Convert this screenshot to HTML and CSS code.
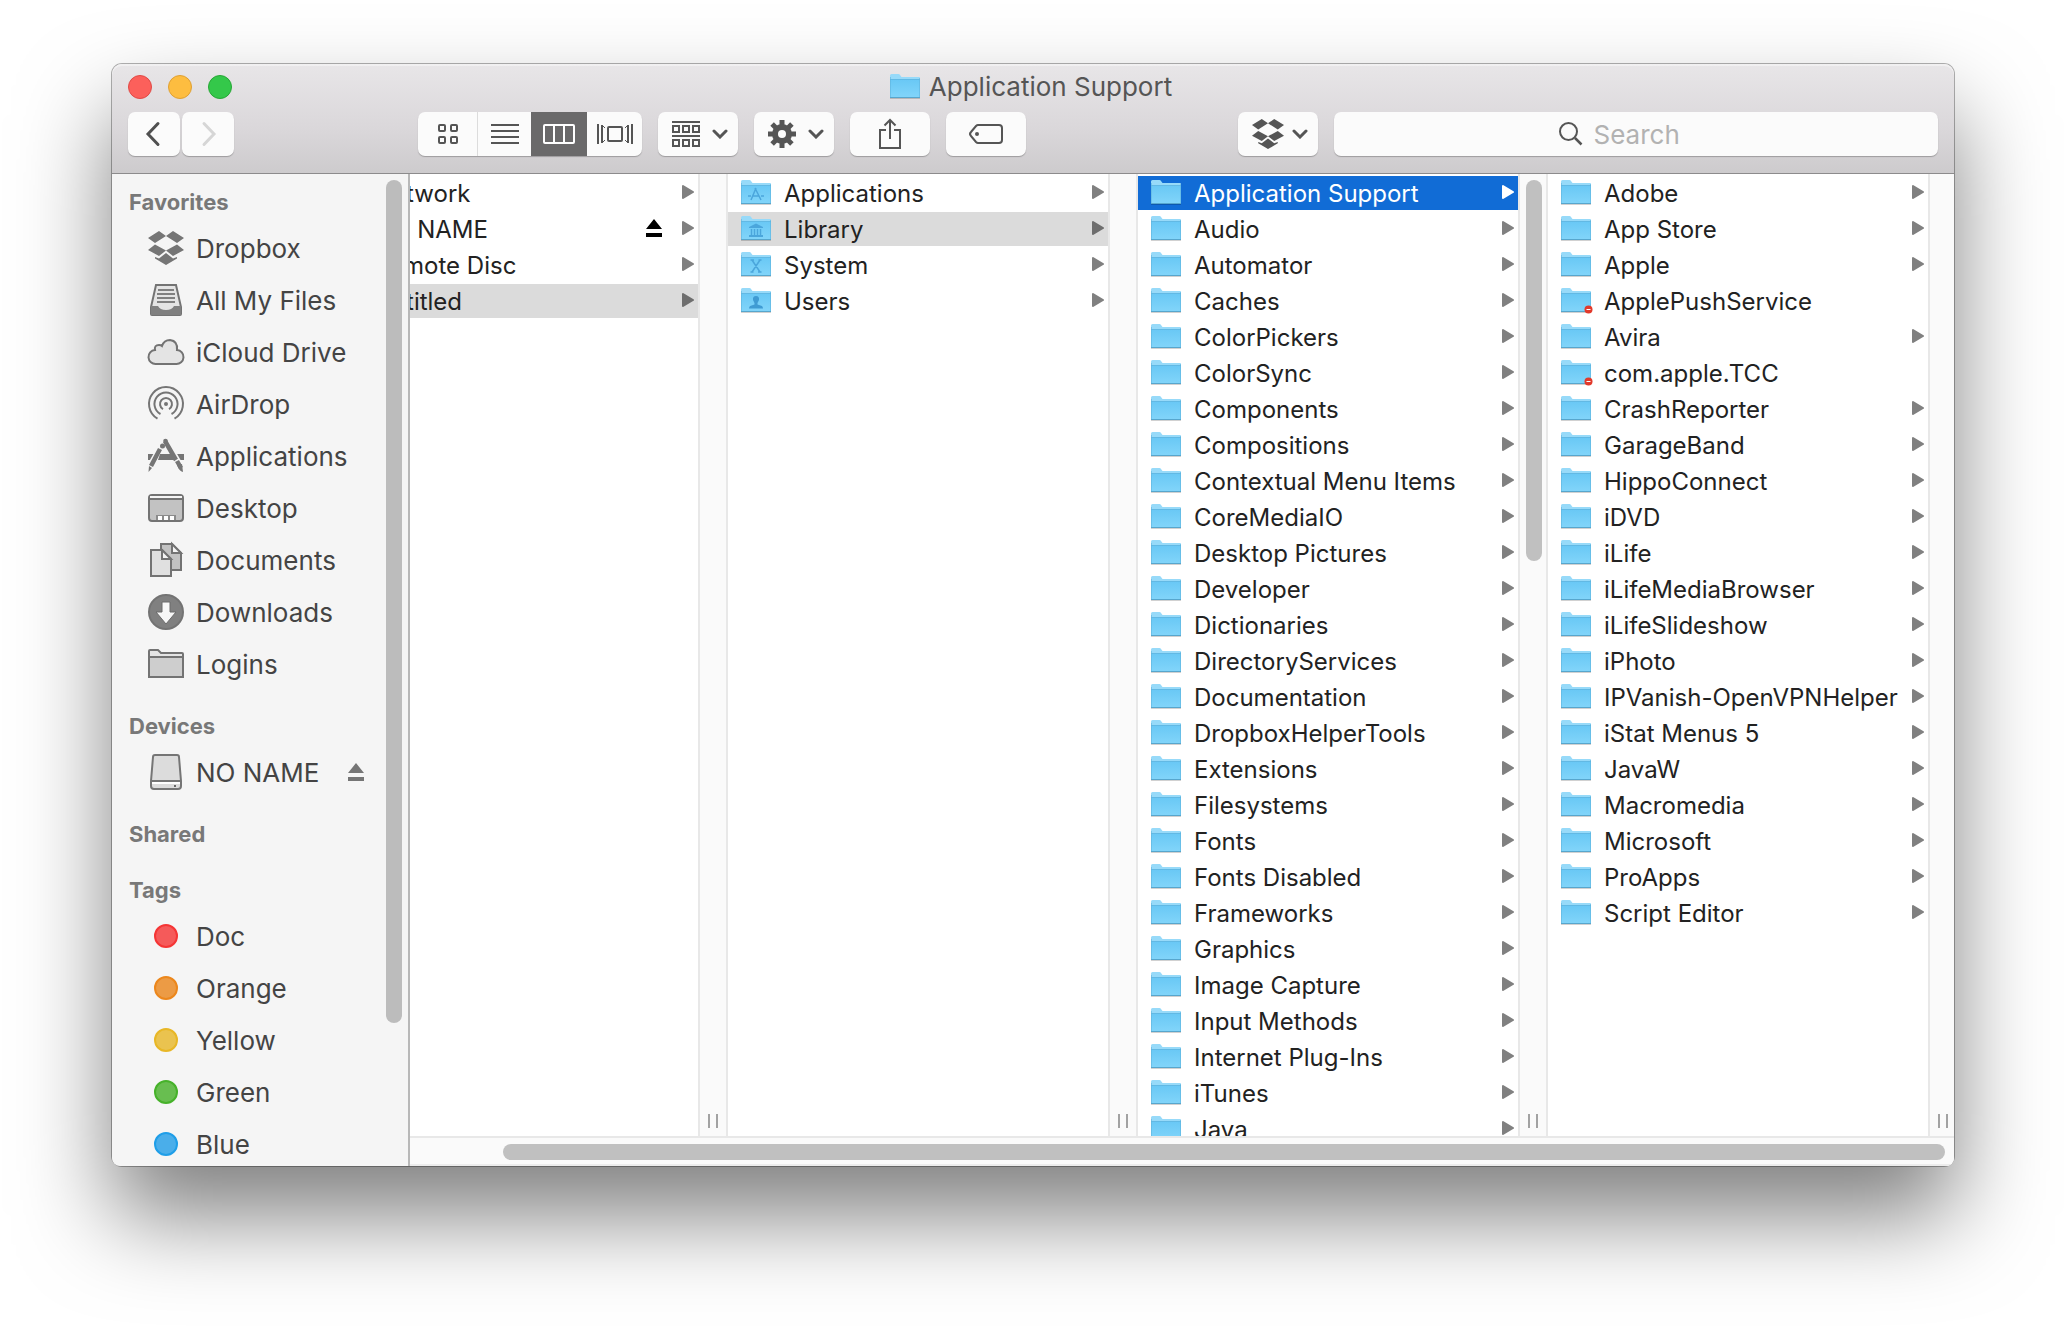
FILE: index.html
```html
<!DOCTYPE html>
<html lang="en">
<head>
<meta charset="utf-8">
<title>Application Support</title>
<link rel="stylesheet" href="styles.css">
</head>
<body>
<svg class="sprite" aria-hidden="true">
  <defs>
    <linearGradient id="folder-face" x1="0" y1="0" x2="0" y2="1">
      <stop offset="0" stop-color="#69c8f5"/><stop offset="1" stop-color="#82d5fa"/>
    </linearGradient>
  </defs>
  <symbol id="folder" viewBox="0 0 30 25">
    <path d="M0 3V1.500Q0 0 1.500 0H8.500Q9.500 0 10 1L11.500 3H29Q30 3 30 4V8H0Z" fill="#97daf9"/>
    <path d="M0 5.500H30V24H0Z" fill="url(#folder-face)"/>
    <path d="M0 5.500H30" stroke="#62b9e4"/>
    <path d="M.5 3V23.500H29.500V4" fill="none" stroke="#5fb4de" stroke-opacity=".6"/>
    <path d="M0 23.500H30" stroke="#57a6cd"/>
    <path d="M0 24.500H30" stroke="#000" stroke-opacity=".18"/>
  </symbol>
  <symbol id="arrow" viewBox="0 0 12 14"><path d="M1 1L11 7L1 13Z" fill="currentColor" stroke="currentColor" stroke-width="2" stroke-linejoin="round"/></symbol>
  <symbol id="chevron" viewBox="0 0 16 10"><path d="M2 2L8 8L14 2" fill="none" stroke="currentColor" stroke-width="3" stroke-linecap="round"/></symbol>
  <symbol id="eject" viewBox="0 0 16 18"><path d="M8 0L16 10H0ZM0 14H16V18H0Z" fill="currentColor"/></symbol>
  <symbol id="dropbox" viewBox="0 0 36 36"><path d="M0 8L11 1L18 6L7 13ZM36 8L25 1L18 6L29 13ZM0 20L7 14.500L18 20.500L11 26ZM36 20L29 14.500L18 20.500L25 26ZM7 27L11 28.500L18 23L25 28.500L29 27V28.500L18 35L7 28.500Z" fill="currentColor"/></symbol>
</svg>

<main class="window">
  <header class="header">
    <div class="titlebar">
      <div class="lights">
        <button class="light close" aria-label="Close"></button>
        <button class="light minimize" aria-label="Minimize"></button>
        <button class="light expand" aria-label="Zoom"></button>
      </div>
      <h1 class="title"><svg class="folder"><use href="#folder"/></svg>Application Support</h1>
    </div>
    <div class="toolbar">
      <div class="nav">
        <button class="tool step" aria-label="Back"><svg width="16" height="26" viewBox="0 0 16 26"><path d="M12 2.500L2 13L12 23.500" fill="none" stroke="#505050" stroke-width="3" stroke-linecap="round"/></svg></button>
        <button class="tool step" aria-label="Forward"><svg width="16" height="26" viewBox="0 0 16 26"><path d="M4 2.500L14 13L4 23.500" fill="none" stroke="#d6d6d6" stroke-width="3" stroke-linecap="round"/></svg></button>
      </div>
      <div class="views">
        <button class="view" aria-label="Icons"><svg width="20" height="20" viewBox="0 0 20 20" fill="none" stroke="currentColor" stroke-width="2"><rect x="1" y="1" width="6" height="6" rx="1"/><rect x="13" y="1" width="6" height="6" rx="1"/><rect x="1" y="13" width="6" height="6" rx="1"/><rect x="13" y="13" width="6" height="6" rx="1"/></svg></button>
        <button class="view" aria-label="List"><svg width="28" height="20" viewBox="0 0 28 20"><path d="M0 1H28M0 7H28M0 13H28M0 19H28" stroke="currentColor" stroke-width="2"/></svg></button>
        <button class="view selected" aria-label="Columns"><svg width="32" height="20" viewBox="0 0 32 20"><path d="M2 1H30Q31 1 31 2V18Q31 19 30 19H2Q1 19 1 18V2Q1 1 2 1ZM11 1V19M21 1V19" fill="none" stroke="currentColor" stroke-width="2"/></svg></button>
        <button class="view" aria-label="Cover Flow"><svg width="36" height="20" viewBox="0 0 36 20" fill="none" stroke="currentColor" stroke-width="2"><rect x="11" y="3" width="14" height="14" rx="1"/><path d="M1 0V20M35 0V20M5 1V19M31 1V19"/><path d="M6 2L8 4M6 18L8 16M30 2L28 4M30 18L28 16" stroke-width="1"/></svg></button>
      </div>
      <button class="tool menu" aria-label="Arrange"><svg width="28" height="26" viewBox="0 0 28 26" fill="none" stroke="currentColor" stroke-width="2"><path d="M0 1H28M0 15H28"/><rect x="1" y="5" width="6" height="6"/><rect x="11" y="5" width="6" height="6"/><rect x="21" y="5" width="6" height="6"/><rect x="1" y="19" width="6" height="6"/><rect x="11" y="19" width="6" height="6"/><rect x="21" y="19" width="6" height="6"/></svg><svg class="chevron"><use href="#chevron"/></svg></button>
      <button class="tool menu" aria-label="Action"><svg width="28" height="28" viewBox="0 0 28 28"><g stroke="currentColor" stroke-width="5"><path d="M14 0V28M0 14H28M4.100 4.100L23.900 23.900M23.900 4.100L4.100 23.900"/></g><circle cx="14" cy="14" r="10" fill="currentColor"/><circle cx="14" cy="14" r="4" fill="#fbfbfb"/></svg><svg class="chevron"><use href="#chevron"/></svg></button>
      <button class="tool" aria-label="Share"><svg width="22" height="32" viewBox="0 0 22 32"><path d="M7 12H1V30H21V12H15M11 21V2M5.500 7.500L11 2L16.500 7.500" fill="none" stroke="currentColor" stroke-width="2"/></svg></button>
      <button class="tool" aria-label="Edit Tags"><svg width="34" height="20" viewBox="0 0 34 20"><path d="M9 1H30Q33 1 33 4V16Q33 19 30 19H9Q8 19 7 18L2 12Q0 10 2 8L7 2Q8 1 9 1Z" fill="none" stroke="currentColor" stroke-width="2"/><circle cx="8" cy="10" r="2" fill="currentColor"/></svg></button>
      <button class="tool menu dropbox" aria-label="Dropbox"><svg width="32" height="32"><use href="#dropbox"/></svg><svg class="chevron"><use href="#chevron"/></svg></button>
      <label class="search"><svg width="24" height="24" viewBox="0 0 24 24"><circle cx="9.500" cy="9.500" r="8.500" fill="none" stroke="currentColor" stroke-width="2"/><path d="M16 16L22.500 22.500" stroke="currentColor" stroke-width="2.500"/></svg><input class="query" type="search" placeholder="Search" aria-label="Search"></label>
    </div>
  </header>

  <div class="body">
    <nav class="sidebar">
      <h2 class="heading">Favorites</h2>
      <a class="place" href="#"><svg class="glyph"><use href="#dropbox"/></svg>Dropbox</a>
      <a class="place" href="#"><svg class="glyph" viewBox="0 0 36 36"><path d="M8 3H28L33 25V32Q33 33 32 33H4Q3 33 3 32V25Z" fill="#e4e4e4" stroke="#737373" stroke-width="2"/><path d="M3 24H10Q12 28 18 28T26 24H33V33H3Z" fill="#808080"/><path d="M10 8H26M9 12H27M9 16H27M9 20H27" stroke="#808080" stroke-width="2"/></svg>All My Files</a>
      <a class="place" href="#"><svg class="glyph" viewBox="0 0 36 36"><path d="M8 30A7 7 0 0 1 7 16Q6 11 11 11Q13 11 14 12Q16 6 22 6Q30 7 29 16A7 7 0 0 1 28 30Z" fill="#e4e4e4" stroke="#737373" stroke-width="2"/></svg>iCloud Drive</a>
      <a class="place" href="#"><svg class="glyph" viewBox="0 0 36 36" fill="none" stroke="#757575" stroke-width="2"><circle cx="18" cy="18" r="2" fill="#757575" stroke="none"/><path d="M9.500 32.700A17 17 0 1 1 26.500 32.700M12.500 28A11.500 11.500 0 1 1 23.500 28M15 23.200A6 6 0 1 1 21 23.200"/></svg>AirDrop</a>
      <a class="place" href="#"><svg class="glyph" viewBox="0 0 36 36"><path d="M0 16H36V22H0Z" fill="#757575"/><path d="M15 7L2 30M17 3L32 29" stroke="#f5f5f5" stroke-width="8"/><path d="M12 16H24L26 22H10Z" fill="#757575"/><path d="M12 11L3 28M17 3L28 22M29 23L33 30" stroke="#757575" stroke-width="4.500"/><circle cx="14.500" cy="8" r="2.500" fill="#757575"/><circle cx="17.500" cy="3" r="2.300" fill="#757575"/><path d="M.5 34L1 28L4 30ZM29 27L34 26L35 34Q31 33 29 27Z" fill="#757575"/></svg>Applications</a>
      <a class="place" href="#"><svg class="glyph" viewBox="0 0 36 36"><rect x="1" y="5" width="34" height="26" rx="3" fill="#c2c2c2" stroke="#737373" stroke-width="2"/><path d="M2 6H34V8H2Z" fill="#f5f5f5"/><path d="M1 9H35" stroke="#737373" stroke-width="2"/><path d="M8 25H28V30H8Z" fill="#8b8b8b"/><path d="M10 26H14V30H10ZM16 26H20V30H16ZM22 26H26V30H22Z" fill="#fff"/></svg>Desktop</a>
      <a class="place" href="#"><svg class="glyph" viewBox="0 0 36 36" stroke="#737373" stroke-width="2"><path d="M13 2H24L33 11V28H13Z" fill="#c2c2c2"/><path d="M24 2V11H33Z" fill="#f5f5f5"/><path d="M3 8H14L23 17V34H3Z" fill="#e0e0e0"/><path d="M14 8V17H23Z" fill="#f5f5f5"/></svg>Documents</a>
      <a class="place" href="#"><svg class="glyph" viewBox="0 0 36 36"><circle cx="18" cy="18" r="17" fill="#808080" stroke="#737373" stroke-width="2"/><path d="M14 8H22V18H28L18 30L8 18H14Z" fill="#f7f7f7" stroke="#6b6b6b"/></svg>Downloads</a>
      <a class="place" href="#"><svg class="glyph" viewBox="0 0 36 36"><path d="M1 31V5Q1 4 2 4H10L13 7H34Q35 7 35 8V31Z" fill="#e4e4e4" stroke="#737373" stroke-width="2"/><path d="M2 12H34V30H2Z" fill="#cecece"/><path d="M1 11H35" stroke="#737373" stroke-width="2"/></svg>Logins</a>
      <h2 class="heading">Devices</h2>
      <a class="place" href="#"><svg class="glyph" viewBox="0 0 36 36"><path d="M7 1H29Q31 1 31 3L33 27V32Q33 35 30 35H6Q3 35 3 32V27L5 3Q5 1 7 1Z" fill="#dcdcdc" stroke="#757575" stroke-width="2"/><path d="M3 27H33" stroke="#757575" stroke-width="2"/><path d="M4 29H32" stroke="#fff" stroke-width="2"/><path d="M26 31H28V33H26Z" fill="#666"/></svg><span class="label">NO NAME</span><svg class="eject"><use href="#eject"/></svg></a>
      <h2 class="heading">Shared</h2>
      <h2 class="heading">Tags</h2>
      <a class="place" href="#"><span class="dot doc"></span>Doc</a>
      <a class="place" href="#"><span class="dot orange"></span>Orange</a>
      <a class="place" href="#"><span class="dot yellow"></span>Yellow</a>
      <a class="place" href="#"><span class="dot green"></span>Green</a>
      <a class="place" href="#"><span class="dot blue"></span>Blue</a>
      <span class="thumb sidebar-thumb"></span>
    </nav>

    <section class="browser">
      <div class="columns">
        <div class="column">
          <a class="row" href="#"><svg class="folder"><use href="#folder"/></svg><span class="name">Network</span><svg class="arrow"><use href="#arrow"/></svg></a>
          <a class="row" href="#"><svg class="folder"><use href="#folder"/></svg><span class="name">NO NAME</span><svg class="eject"><use href="#eject"/></svg><svg class="arrow"><use href="#arrow"/></svg></a>
          <a class="row" href="#"><svg class="folder"><use href="#folder"/></svg><span class="name">Remote Disc</span><svg class="arrow"><use href="#arrow"/></svg></a>
          <a class="row open" href="#"><svg class="folder"><use href="#folder"/></svg><span class="name">Untitled</span><svg class="arrow"><use href="#arrow"/></svg></a>
        </div>
        <div class="gutter"></div>
        <div class="column">
          <a class="row" href="#"><svg class="folder" viewBox="0 0 30 25"><use href="#folder"/><path d="M15 8L10 20M14 8L20 20M7 16H10M12 16H18M20 16H23" fill="none" stroke="#4ba6dc" stroke-width="1.500"/></svg><span class="name">Applications</span><svg class="arrow"><use href="#arrow"/></svg></a>
          <a class="row open" href="#"><svg class="folder" viewBox="0 0 30 25"><use href="#folder"/><path d="M8 11L15 7.500L22 11V12H8ZM8 19H22V21H8Z" fill="#4ba6dc"/><path d="M10.500 13V19M13.500 13V19M16.500 13V19M19.500 13V19" stroke="#4ba6dc" stroke-width="1.500"/></svg><span class="name">Library</span><svg class="arrow"><use href="#arrow"/></svg></a>
          <a class="row" href="#"><svg class="folder" viewBox="0 0 30 25"><use href="#folder"/><path d="M11 8L19 20M19 8L11 20M9.500 8H13M17.500 8H20.500M9.500 20H12.500M17 20H20.500" fill="none" stroke="#4ba6dc" stroke-width="1.500"/></svg><span class="name">System</span><svg class="arrow"><use href="#arrow"/></svg></a>
          <a class="row" href="#"><svg class="folder" viewBox="0 0 30 25"><use href="#folder"/><path d="M15 8Q18.500 8 18 12L16.500 15V16.500L21 18Q22 19 22 20.500H8Q8 19 9 18L13.500 16.500V15L12 12Q11.500 8 15 8Z" fill="#3f9bd3"/></svg><span class="name">Users</span><svg class="arrow"><use href="#arrow"/></svg></a>
        </div>
        <div class="gutter"></div>
        <div class="column">
          <a class="row active" href="#"><svg class="folder"><use href="#folder"/></svg><span class="name">Application Support</span><svg class="arrow"><use href="#arrow"/></svg></a>
          <a class="row" href="#"><svg class="folder"><use href="#folder"/></svg><span class="name">Audio</span><svg class="arrow"><use href="#arrow"/></svg></a>
          <a class="row" href="#"><svg class="folder"><use href="#folder"/></svg><span class="name">Automator</span><svg class="arrow"><use href="#arrow"/></svg></a>
          <a class="row" href="#"><svg class="folder"><use href="#folder"/></svg><span class="name">Caches</span><svg class="arrow"><use href="#arrow"/></svg></a>
          <a class="row" href="#"><svg class="folder"><use href="#folder"/></svg><span class="name">ColorPickers</span><svg class="arrow"><use href="#arrow"/></svg></a>
          <a class="row" href="#"><svg class="folder"><use href="#folder"/></svg><span class="name">ColorSync</span><svg class="arrow"><use href="#arrow"/></svg></a>
          <a class="row" href="#"><svg class="folder"><use href="#folder"/></svg><span class="name">Components</span><svg class="arrow"><use href="#arrow"/></svg></a>
          <a class="row" href="#"><svg class="folder"><use href="#folder"/></svg><span class="name">Compositions</span><svg class="arrow"><use href="#arrow"/></svg></a>
          <a class="row" href="#"><svg class="folder"><use href="#folder"/></svg><span class="name">Contextual Menu Items</span><svg class="arrow"><use href="#arrow"/></svg></a>
          <a class="row" href="#"><svg class="folder"><use href="#folder"/></svg><span class="name">CoreMediaIO</span><svg class="arrow"><use href="#arrow"/></svg></a>
          <a class="row" href="#"><svg class="folder"><use href="#folder"/></svg><span class="name">Desktop Pictures</span><svg class="arrow"><use href="#arrow"/></svg></a>
          <a class="row" href="#"><svg class="folder"><use href="#folder"/></svg><span class="name">Developer</span><svg class="arrow"><use href="#arrow"/></svg></a>
          <a class="row" href="#"><svg class="folder"><use href="#folder"/></svg><span class="name">Dictionaries</span><svg class="arrow"><use href="#arrow"/></svg></a>
          <a class="row" href="#"><svg class="folder"><use href="#folder"/></svg><span class="name">DirectoryServices</span><svg class="arrow"><use href="#arrow"/></svg></a>
          <a class="row" href="#"><svg class="folder"><use href="#folder"/></svg><span class="name">Documentation</span><svg class="arrow"><use href="#arrow"/></svg></a>
          <a class="row" href="#"><svg class="folder"><use href="#folder"/></svg><span class="name">DropboxHelperTools</span><svg class="arrow"><use href="#arrow"/></svg></a>
          <a class="row" href="#"><svg class="folder"><use href="#folder"/></svg><span class="name">Extensions</span><svg class="arrow"><use href="#arrow"/></svg></a>
          <a class="row" href="#"><svg class="folder"><use href="#folder"/></svg><span class="name">Filesystems</span><svg class="arrow"><use href="#arrow"/></svg></a>
          <a class="row" href="#"><svg class="folder"><use href="#folder"/></svg><span class="name">Fonts</span><svg class="arrow"><use href="#arrow"/></svg></a>
          <a class="row" href="#"><svg class="folder"><use href="#folder"/></svg><span class="name">Fonts Disabled</span><svg class="arrow"><use href="#arrow"/></svg></a>
          <a class="row" href="#"><svg class="folder"><use href="#folder"/></svg><span class="name">Frameworks</span><svg class="arrow"><use href="#arrow"/></svg></a>
          <a class="row" href="#"><svg class="folder"><use href="#folder"/></svg><span class="name">Graphics</span><svg class="arrow"><use href="#arrow"/></svg></a>
          <a class="row" href="#"><svg class="folder"><use href="#folder"/></svg><span class="name">Image Capture</span><svg class="arrow"><use href="#arrow"/></svg></a>
          <a class="row" href="#"><svg class="folder"><use href="#folder"/></svg><span class="name">Input Methods</span><svg class="arrow"><use href="#arrow"/></svg></a>
          <a class="row" href="#"><svg class="folder"><use href="#folder"/></svg><span class="name">Internet Plug-Ins</span><svg class="arrow"><use href="#arrow"/></svg></a>
          <a class="row" href="#"><svg class="folder"><use href="#folder"/></svg><span class="name">iTunes</span><svg class="arrow"><use href="#arrow"/></svg></a>
          <a class="row" href="#"><svg class="folder"><use href="#folder"/></svg><span class="name">Java</span><svg class="arrow"><use href="#arrow"/></svg></a>
        </div>
        <div class="gutter"><span class="thumb column-thumb"></span></div>
        <div class="column">
          <a class="row" href="#"><svg class="folder"><use href="#folder"/></svg><span class="name">Adobe</span><svg class="arrow"><use href="#arrow"/></svg></a>
          <a class="row" href="#"><svg class="folder"><use href="#folder"/></svg><span class="name">App Store</span><svg class="arrow"><use href="#arrow"/></svg></a>
          <a class="row" href="#"><svg class="folder"><use href="#folder"/></svg><span class="name">Apple</span><svg class="arrow"><use href="#arrow"/></svg></a>
          <a class="row" href="#"><svg class="folder" viewBox="0 0 30 25"><use href="#folder"/><circle cx="27.500" cy="21.500" r="4" fill="#e2392b"/><path d="M25.500 21.500H29.500" stroke="#fff"/></svg><span class="name">ApplePushService</span></a>
          <a class="row" href="#"><svg class="folder"><use href="#folder"/></svg><span class="name">Avira</span><svg class="arrow"><use href="#arrow"/></svg></a>
          <a class="row" href="#"><svg class="folder" viewBox="0 0 30 25"><use href="#folder"/><circle cx="27.500" cy="21.500" r="4" fill="#e2392b"/><path d="M25.500 21.500H29.500" stroke="#fff"/></svg><span class="name">com.apple.TCC</span></a>
          <a class="row" href="#"><svg class="folder"><use href="#folder"/></svg><span class="name">CrashReporter</span><svg class="arrow"><use href="#arrow"/></svg></a>
          <a class="row" href="#"><svg class="folder"><use href="#folder"/></svg><span class="name">GarageBand</span><svg class="arrow"><use href="#arrow"/></svg></a>
          <a class="row" href="#"><svg class="folder"><use href="#folder"/></svg><span class="name">HippoConnect</span><svg class="arrow"><use href="#arrow"/></svg></a>
          <a class="row" href="#"><svg class="folder"><use href="#folder"/></svg><span class="name">iDVD</span><svg class="arrow"><use href="#arrow"/></svg></a>
          <a class="row" href="#"><svg class="folder"><use href="#folder"/></svg><span class="name">iLife</span><svg class="arrow"><use href="#arrow"/></svg></a>
          <a class="row" href="#"><svg class="folder"><use href="#folder"/></svg><span class="name">iLifeMediaBrowser</span><svg class="arrow"><use href="#arrow"/></svg></a>
          <a class="row" href="#"><svg class="folder"><use href="#folder"/></svg><span class="name">iLifeSlideshow</span><svg class="arrow"><use href="#arrow"/></svg></a>
          <a class="row" href="#"><svg class="folder"><use href="#folder"/></svg><span class="name">iPhoto</span><svg class="arrow"><use href="#arrow"/></svg></a>
          <a class="row" href="#"><svg class="folder"><use href="#folder"/></svg><span class="name">IPVanish-OpenVPNHelper</span><svg class="arrow"><use href="#arrow"/></svg></a>
          <a class="row" href="#"><svg class="folder"><use href="#folder"/></svg><span class="name">iStat Menus 5</span><svg class="arrow"><use href="#arrow"/></svg></a>
          <a class="row" href="#"><svg class="folder"><use href="#folder"/></svg><span class="name">JavaW</span><svg class="arrow"><use href="#arrow"/></svg></a>
          <a class="row" href="#"><svg class="folder"><use href="#folder"/></svg><span class="name">Macromedia</span><svg class="arrow"><use href="#arrow"/></svg></a>
          <a class="row" href="#"><svg class="folder"><use href="#folder"/></svg><span class="name">Microsoft</span><svg class="arrow"><use href="#arrow"/></svg></a>
          <a class="row" href="#"><svg class="folder"><use href="#folder"/></svg><span class="name">ProApps</span><svg class="arrow"><use href="#arrow"/></svg></a>
          <a class="row" href="#"><svg class="folder"><use href="#folder"/></svg><span class="name">Script Editor</span><svg class="arrow"><use href="#arrow"/></svg></a>
        </div>
        <div class="gutter last"></div>
      </div>
      <div class="track"><span class="bar"></span></div>
    </section>
  </div>
</main>
</body>
</html>
```
FILE: styles.css
```css
*,
*::after {
  box-sizing: border-box;
}

body {
  margin: 0;
  height: 100vh;
  padding: 64px 112px 160px;
  overflow: hidden;
  background: #fff;
  color: #222;
  font-family: Inter, "Liberation Sans", sans-serif;
  font-size: 24px;
}

a {
  color: inherit;
  text-decoration: none;
}

button {
  margin: 0;
  padding: 0;
  border: 0;
  color: #555;
}

svg {
  display: block;
  flex: none;
  overflow: visible;
}

.sprite {
  position: absolute;
  width: 0;
  height: 0;
}

.window {
  display: flex;
  flex-direction: column;
  height: 100%;
  border-radius: 10px;
  box-shadow: 0 0 0 1px rgba(0, 0, 0, .3), 0 50px 92px rgba(0, 0, 0, .5);
}

/* Title bar and toolbar */
.header {
  display: flex;
  flex-direction: column;
  gap: 14px;
  padding: 10px 16px 17px;
  border-bottom: 1px solid #8c8b8c;
  border-radius: 10px 10px 0 0;
  background: linear-gradient(#e8e6e8, #dad7da 60%, #cdcbcd);
  box-shadow: inset 0 2px 0 rgba(255, 255, 255, .4);
}

.titlebar {
  display: grid;
  grid-template-columns: 1fr auto 1fr;
  align-items: center;
  height: 24px;
}

.lights {
  display: flex;
  gap: 16px;
}

.light {
  width: 24px;
  height: 24px;
  border: 1px solid;
  border-radius: 50%;
}

.close { background: #fc605b; border-color: #e04a46; }
.minimize { background: #fdbd40; border-color: #dfa033; }
.expand { background: #34c84a; border-color: #27a736; }

.title {
  display: flex;
  align-items: center;
  gap: 9px;
  margin: 0;
  padding-right: 4px;
  color: #555;
  font-size: 26px;
  font-weight: 400;
  line-height: 24px;
}

.folder {
  width: 30px;
  height: 25px;
  margin-bottom: 1px;
}

.toolbar {
  display: flex;
  gap: 16px;
  height: 44px;
}

.nav {
  display: flex;
  gap: 2px;
  margin-right: 168px;
}

.tool,
.views,
.search {
  border-radius: 7px;
  background: #fbfbfb;
  box-shadow: 0 1px 1px rgba(0, 0, 0, .25);
}

.tool {
  display: flex;
  align-items: center;
  justify-content: center;
  width: 80px;
}

.step { width: 52px; }
.menu { gap: 12px; padding-left: 4px; }
.dropbox { gap: 8px; margin-left: 196px; }

.chevron {
  width: 16px;
  height: 10px;
}

.views {
  display: grid;
  grid-template-columns: 60px 53px 56px 55px;
  overflow: hidden;
}

.view {
  display: flex;
  align-items: center;
  justify-content: center;
  background: none;
}

.view:first-child { border-right: 1px solid #dcdcdc; }
.view.selected { background: #6a696a; color: #fff; }

.search {
  display: flex;
  flex: 1;
  align-items: center;
  justify-content: center;
  gap: 11px;
  color: #555;
}

.query {
  width: 120px;
  padding: 0;
  border: 0;
  outline: 0;
  background: none;
  color: #333;
  font: inherit;
  font-size: 26px;
}

.query::placeholder { color: #b2b2b2; }

/* Sidebar */
.body {
  display: flex;
  flex: 1;
  min-height: 0;
  overflow: hidden;
  border-radius: 0 0 8px 8px;
}

.sidebar {
  position: relative;
  flex: none;
  width: 298px;
  padding: 8px 44px 0 17px;
  overflow: hidden;
  border-right: 2px solid #b8b8b8;
  background: #f5f5f5;
}

.heading {
  margin: 0;
  color: #787878;
  font-size: 22px;
  font-weight: 700;
  line-height: 40px;
}

.place + .heading,
.heading + .heading { margin-top: 16px; }

.place {
  display: flex;
  align-items: center;
  gap: 12px;
  height: 52px;
  padding-left: 19px;
  color: #444;
  font-size: 26px;
  white-space: nowrap;
}

.glyph {
  width: 36px;
  height: 36px;
  color: #757575;
}

.label { flex: 1; }

.eject {
  width: 16px;
  height: 18px;
}

.place .eject { color: #757575; }

.dot {
  width: 24px;
  height: 24px;
  margin: 0 6px;
  border: 2px solid;
  border-radius: 50%;
}

.doc { background: #f55a5a; border-color: #f53535; }
.orange { background: #ec9b45; border-color: #ec871c; }
.yellow { background: #eac34f; border-color: #e8b726; }
.green { background: #68be50; border-color: #46b22a; }
.blue { background: #4aaeea; border-color: #1f9ee8; }

.thumb {
  position: absolute;
  top: 6px;
  width: 16px;
  border-radius: 8px;
  background: #c0c0c0;
}

.sidebar-thumb {
  right: 6px;
  height: 85%;
  background: #bcbcbc;
}

/* Column browser */
.browser {
  display: flex;
  flex: 1;
  flex-direction: column;
  min-width: 0;
  background: #fff;
}

.columns {
  display: flex;
  flex: 1;
  justify-content: flex-end;
  min-height: 0;
  overflow: hidden;
}

.column {
  display: flex;
  flex: none;
  flex-direction: column;
  gap: 2px;
  width: 380px;
  padding-top: 2px;
}

.row {
  display: flex;
  flex: none;
  align-items: center;
  height: 34px;
  padding: 0 4px 0 13px;
  white-space: nowrap;
}

.row.open { background: #dbdbdb; }
.row.active { background: #116cd6; color: #fff; }

.name {
  flex: 1;
  margin-left: 13px;
}

.arrow {
  width: 12px;
  height: 14px;
  margin-bottom: 2px;
  color: #808080;
}

.row .eject {
  margin: 0 20px 2px 0;
  color: #000;
}

.open .arrow { color: #6e6e6e; }
.active .arrow { color: #fff; }

.gutter {
  position: relative;
  display: flex;
  flex: none;
  align-items: flex-end;
  justify-content: center;
  width: 30px;
  padding-bottom: 8px;
  border: solid #e8e8e8;
  border-width: 0 2px;
  background: #fafafa;
}

.gutter::after {
  width: 10px;
  height: 14px;
  border: solid #a2a2a2;
  border-width: 0 2px;
  content: "";
}

.gutter.last {
  width: 26px;
  padding-left: 2px;
  border-right: 0;
}

.column-thumb {
  left: 6px;
  height: 381px;
}

.track {
  display: flex;
  height: 30px;
  padding: 6px 9px 4px 93px;
  border-top: 2px solid #e8e8e8;
  border-bottom: 2px solid #ececec;
  background: #fafafa;
}

.bar {
  flex: 1;
  border-radius: 8px;
  background: #c0c0c0;
}
```
